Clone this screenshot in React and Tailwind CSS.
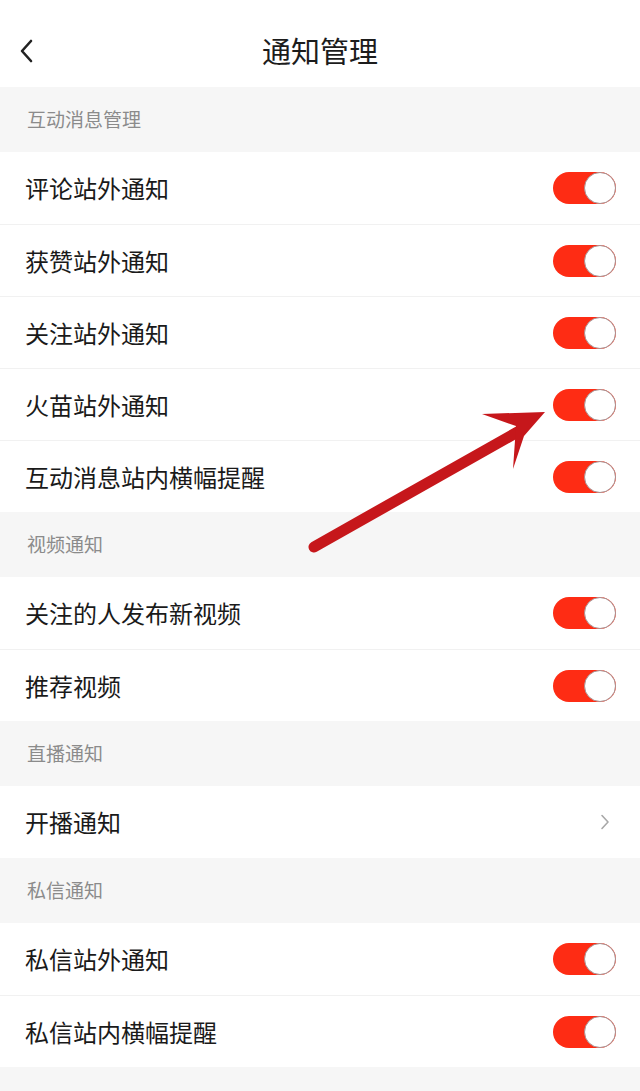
import React from "react";

const sections = [
  {
    title: "互动消息管理",
    rows: [
      { label: "评论站外通知", type: "toggle" },
      { label: "获赞站外通知", type: "toggle" },
      { label: "关注站外通知", type: "toggle" },
      { label: "火苗站外通知", type: "toggle" },
      { label: "互动消息站内横幅提醒", type: "toggle" },
    ],
  },
  {
    title: "视频通知",
    rows: [
      { label: "关注的人发布新视频", type: "toggle" },
      { label: "推荐视频", type: "toggle" },
    ],
  },
  {
    title: "直播通知",
    rows: [{ label: "开播通知", type: "link" }],
  },
  {
    title: "私信通知",
    rows: [
      { label: "私信站外通知", type: "toggle" },
      { label: "私信站内横幅提醒", type: "toggle" },
    ],
  },
];

const Toggle = () => (
  <div className="flex h-[32px] w-[63px] items-center justify-end rounded-full bg-[#fe2c14]">
    <div className="h-[32px] w-[32px] rounded-full border border-[#a89090] bg-white" />
  </div>
);

const Chevron = () => (
  <svg width="10" height="16" viewBox="0 0 10 16" fill="none">
    <path d="M2 1.5 L8 8 L2 14.5" stroke="#a8a8a8" strokeWidth="1.6" strokeLinecap="round" strokeLinejoin="round" />
  </svg>
);

export default function App() {
  return (
    <div
      className="relative min-h-[1091px] w-[640px] overflow-hidden bg-[#f6f6f6]"
      style={{ fontFamily: '"Noto Sans CJK SC", "Noto Sans", sans-serif' }}
    >
      {/* Header */}
      <div className="relative flex h-[87px] items-center justify-center bg-white pt-[13px]">
        <div className="absolute left-[19px] top-[39px]">
          <svg width="16" height="24" viewBox="0 0 16 24" fill="none">
            <path d="M12 2 L3 12 L12 22" stroke="#222" strokeWidth="2.6" strokeLinecap="round" strokeLinejoin="round" />
          </svg>
        </div>
        <h1 className="text-[29px] leading-none text-[#1c1c1c]">通知管理</h1>
      </div>

      {sections.map((section) => (
        <div key={section.title}>
          <div className="flex h-[65px] items-center bg-[#f6f6f6] pl-[27px] text-[19px] text-[#8b8b8b]">
            {section.title}
          </div>
          <div className="bg-white">
            {section.rows.map((row, i) => (
              <div
                key={row.label}
                className={`flex h-[72px] items-center justify-between pl-[25px] pr-[24px] ${
                  i > 0 ? "border-t border-[#f1f1f1]" : ""
                }`}
              >
                <span className="text-[24px] text-[#1a1a1a]">{row.label}</span>
                {row.type === "toggle" ? <Toggle /> : <div className="pr-[6px]"><Chevron /></div>}
              </div>
            ))}
          </div>
        </div>
      ))}

      {/* Red arrow annotation */}
      <svg className="pointer-events-none absolute left-0 top-0" width="640" height="1091" viewBox="0 0 640 1091">
        <line x1="314" y1="547" x2="521" y2="430" stroke="#c6171b" strokeWidth="11" strokeLinecap="round" />
        <polygon points="545,412 482,414 516,426 513,469 524,436" fill="#c6171b" />
      </svg>
    </div>
  );
}
